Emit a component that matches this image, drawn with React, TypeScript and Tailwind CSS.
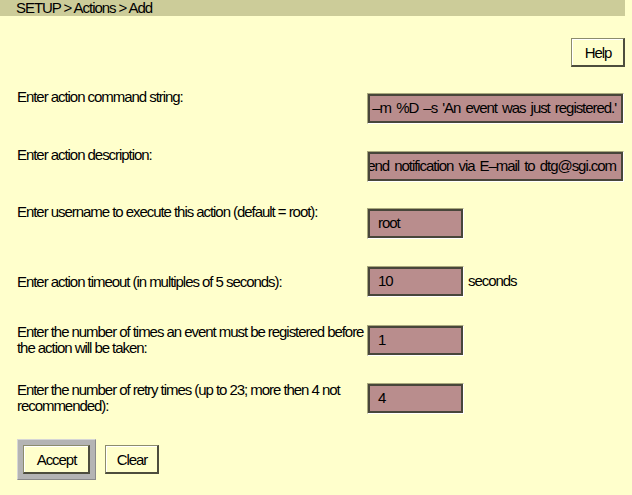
import type { ReactNode } from 'react';

const font = { fontFamily: '"Liberation Sans Narrow", "Liberation Sans", Arial, sans-serif' };

// sunken text field with olive/white bevel
function Field({ value, wide, alignEnd }: { value: string; wide?: boolean; alignEnd?: boolean }) {
  return (
    <div
      className={`h-[31px] shrink-0 border-t border-l border-t-[#a9a97c] border-l-[#a9a97c] border-b border-r border-b-white border-r-white ${
        wide ? 'w-[257px]' : 'w-[97px]'
      }`}
    >
      <div
        className={`h-full border-2 border-[#48463a] bg-[#b98d8d] flex items-center overflow-hidden whitespace-nowrap text-[15px] text-black [word-spacing:2px] ${
          alignEnd ? 'justify-end pr-[5px]' : 'pl-[8px]'
        }`}
      >
        {value}
      </div>
    </div>
  );
}

function Btn({ children, w }: { children: ReactNode; w: string }) {
  return (
    <button
      className={`${w} h-[29px] bg-[#ffffcc] border-t border-l border-t-[#8c8c6c] border-l-[#8c8c6c] border-b-2 border-r-2 border-b-[#4d4d3d] border-r-[#4d4d3d] text-[15px] text-black leading-none`}
    >
      <span className="block h-full border-t border-l border-white flex items-center justify-center">{children}</span>
    </button>
  );
}

export default function App() {
  return (
    <div
      className="w-[632px] h-[495px] bg-[#ffffcc] text-black overflow-hidden tracking-[-1.05px]"
      style={font}
    >
      {/* 标题栏 */}
      <div className="w-[625px] h-[16px] bg-[#cccc99] pl-[16px] text-[15px] leading-[16px]">
        SETUP &gt; Actions &gt; Add
      </div>

      <div className="w-[625px] pl-[17px]">
        <div className="flex justify-end mt-[22px]">
          <Btn w="w-[54px]">Help</Btn>
        </div>

        {/* 表单行 */}
        <div className="flex items-start mt-[22px]">
          <div className="w-[350px] text-[15px] leading-[16px]">Enter action command string:</div>
          <div className="mt-[4px]">
            <Field wide alignEnd value="/usr/sbin/Mail –m %D –s 'An event was just registered.'" />
          </div>
        </div>

        <div className="flex items-start mt-[23px]">
          <div className="w-[350px] text-[15px] leading-[16px]">Enter action description:</div>
          <div className="mt-[4px]">
            <Field wide alignEnd value="Send notification via E–mail to dtg@sgi.com" />
          </div>
        </div>

        <div className="flex items-start mt-[22px]">
          <div className="w-[350px] text-[15px] leading-[16px]">
            Enter username to execute this action (default = root):
          </div>
          <div className="mt-[4px]">
            <Field value="root" />
          </div>
        </div>

        <div className="flex items-center mt-[27px]">
          <div className="w-[350px] text-[15px] leading-[16px]">
            Enter action timeout (in multiples of 5 seconds):
          </div>
          <Field value="10" />
          <span className="ml-[4px] text-[15px]">seconds</span>
        </div>

        <div className="flex items-center mt-[27px]">
          <div className="w-[350px] text-[15px] leading-[16px]">
            Enter the number of times an event must be registered before the action will be taken:
          </div>
          <Field value="1" />
        </div>

        <div className="flex items-center mt-[26px]">
          <div className="w-[350px] text-[15px] leading-[16px]">
            Enter the number of retry times (up to 23; more then 4 not recommended):
          </div>
          <Field value="4" />
        </div>

        {/* 操作按钮 */}
        <div className="flex items-center gap-[9px] mt-[25px]">
          <div className="p-[5px] bg-[#b4b4b4] border border-t-[#d6d6d6] border-l-[#d6d6d6] border-b-[#8a8a8a] border-r-[#8a8a8a]">
            <Btn w="w-[67px]">Accept</Btn>
          </div>
          <Btn w="w-[54px]">Clear</Btn>
        </div>
      </div>
    </div>
  );
}
